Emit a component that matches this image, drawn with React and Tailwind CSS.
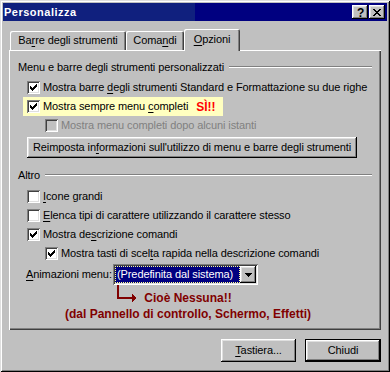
import React from "react";

const RAISED =
  "shadow-[inset_-1px_-1px_#000,inset_1px_1px_#fff,inset_-2px_-2px_#808080,inset_2px_2px_#dfdfdf]";
const SUNKEN =
  "shadow-[inset_1px_1px_#808080,inset_-1px_-1px_#fff,inset_2px_2px_#404040,inset_-2px_-2px_#dfdfdf]";

function Check({ checked, disabled }) {
  return (
    <div
      className={`relative w-[13px] h-[13px] shrink-0 ${disabled ? "bg-[#c0c0c0]" : "bg-white"} ${SUNKEN}`}
    >
      {checked && (
        <svg
          className="absolute left-[3px] top-[3px]"
          width="7"
          height="7"
          viewBox="0 0 7 7"
          shapeRendering="crispEdges"
        >
          <path
            d="M6 0h1v1h-1zM5 1h2v1h-2zM0 2h1v1h-1zM4 2h3v1h-3zM0 3h2v1h-2zM3 3h3v1h-3zM0 4h5v1h-5zM1 5h3v1h-3zM2 6h1v1h-1z"
            fill="#000"
          />
        </svg>
      )}
    </div>
  );
}

function Row({ checked, disabled, indent, children }) {
  return (
    <div
      className={`h-[19px] flex items-center gap-[3px] ${indent ? "pl-[36px]" : "pl-[18px]"} ${disabled ? "text-[#808080]" : ""}`}
    >
      <Check checked={checked} disabled={disabled} />
      <span className="whitespace-nowrap">{children}</span>
    </div>
  );
}

function Sep({ children }) {
  return (
    <div className="h-[14px] flex items-center pl-[9px] pr-[9px] gap-[5px]">
      <span className="whitespace-nowrap">{children}</span>
      <div className="flex-1 h-[2px] border-t border-t-[#808080] border-b border-b-white" />
    </div>
  );
}

const U = ({ children }) => <span className="underline underline-offset-[2px]">{children}</span>;

export default function App() {
  return (
    <div
      className={`w-[390px] h-[372px] bg-[#c0c0c0] p-[3px] flex flex-col text-[11px] leading-[13px] tracking-[-0.1px] text-black [font-family:'Liberation_Sans',Arial,sans-serif] shadow-[inset_1px_1px_#dfdfdf,inset_-1px_-1px_#000,inset_2px_2px_#fff,inset_-2px_-2px_#808080]`}
    >
      {/* Title bar */}
      <div className="h-[18px] shrink-0 flex items-center justify-between pl-[1px] pr-[2px] bg-[linear-gradient(to_right,#10207e_50%,#000080_50%)]">
        <span className="text-white font-bold text-[11px] tracking-[0.5px]">Personalizza</span>
        <div className="flex gap-[1px]">
          <div className={`w-[16px] h-[14px] bg-[#c0c0c0] ${RAISED} flex items-center justify-center`}>
            <span className="font-bold text-[12px] leading-[12px] pl-[1px] pt-[1px]">?</span>
          </div>
          <div className={`w-[16px] h-[14px] bg-[#c0c0c0] ${RAISED} flex items-center justify-center`}>
            <svg width="8" height="7" viewBox="0 0 8 7" shapeRendering="crispEdges">
              <path
                d="M0 0h2v1h-2zM6 0h2v1h-2zM1 1h2v1h-2zM5 1h2v1h-2zM2 2h4v1h-4zM3 3h2v1h-2zM2 4h4v1h-4zM1 5h2v1h-2zM5 5h2v1h-2zM0 6h2v1h-2zM6 6h2v1h-2z"
                fill="#000"
              />
            </svg>
          </div>
        </div>
      </div>

      {/* Tabs */}
      <div className="mt-[8px] ml-[7px] h-[21px] flex items-end">
        <div className="w-[116px] h-[19px] rounded-t-[2px] flex items-center justify-center shadow-[inset_1px_1px_#fff,inset_-1px_0_#404040,inset_-2px_0_#808080]">
          <span>
            Ba<U>r</U>re degli strumenti
          </span>
        </div>
        <div className="w-[58px] h-[19px] rounded-t-[2px] flex items-center justify-center shadow-[inset_1px_1px_#fff,inset_-1px_0_#404040,inset_-2px_0_#808080]">
          <span>
            Coma<U>n</U>di
          </span>
        </div>
        <div className="relative z-10 w-[56px] h-[22px] mb-[-1px] bg-[#c0c0c0] rounded-t-[2px] flex items-center justify-center pb-[1px] shadow-[inset_1px_1px_#fff,inset_-1px_0_#404040,inset_-2px_0_#808080]">
          <span>
            <U>O</U>pzioni
          </span>
        </div>
      </div>

      {/* Panel */}
      <div className="relative ml-[6px] mr-[6px] h-[280px] shrink-0 flex flex-col shadow-[inset_1px_1px_#fff,inset_-1px_-1px_#404040,inset_-2px_-2px_#808080]">
        <div className="mt-[10px]">
          <Sep>Menu e barre degli strumenti personalizzati</Sep>
        </div>
        <div className="mt-[4px]">
          <Row checked>
            Mostra barre <U>d</U>egli strumenti Standard e Formattazione su due righe
          </Row>
        </div>
        <div className="ml-[14px] w-[200px] h-[19px] bg-[#ffffc0] flex items-center gap-[3px] pl-[4px]">
          <Check checked />
          <span className="whitespace-nowrap">
            Mostra sempre menu <U>c</U>ompleti
          </span>
          <span className="ml-[5px] text-[#ff0000] font-bold text-[12px] leading-[14px] tracking-normal">SÌ!!</span>
        </div>
        <Row disabled indent>
          Mostra menu completi dopo alcuni istanti
        </Row>
        <div
          className={`mt-[2px] ml-[18px] w-[330px] h-[21px] ${RAISED} flex items-center justify-center whitespace-nowrap`}
        >
          <span>
            Reimposta in<U>f</U>ormazioni sull'utilizzo di menu e barre degli strumenti
          </span>
        </div>

        <div className="mt-[10px]">
          <Sep>Altro</Sep>
        </div>
        <div className="mt-[5px]">
          <Row>
            <U>I</U>cone grandi
          </Row>
          <Row>
            <U>E</U>lenca tipi di carattere utilizzando il carattere stesso
          </Row>
          <Row checked>
            Mostra de<U>s</U>crizione comandi
          </Row>
          <Row checked indent>
            Mostra tasti di scel<U>t</U>a rapida nella descrizione comandi
          </Row>
        </div>

        <div className="mt-[1px] pl-[17px] h-[21px] flex items-center">
          <span className="w-[87px] whitespace-nowrap">
            <U>A</U>nimazioni menu:
          </span>
          <div className={`w-[145px] h-[21px] bg-white p-[2px] flex ${SUNKEN}`}>
            <div className="flex-1 bg-[#000080] border border-dotted border-[#ffff90] text-white flex items-center pl-[1px] whitespace-nowrap overflow-hidden">
              (Predefinita dal sistema)
            </div>
            <div className={`w-[16px] h-full bg-[#c0c0c0] ${RAISED} flex items-center justify-center`}>
              <svg width="7" height="4" viewBox="0 0 7 4" shapeRendering="crispEdges">
                <path d="M0 0h7v1h-7zM1 1h5v1h-5zM2 2h3v1h-3zM3 3h1v1h-1z" fill="#000" />
              </svg>
            </div>
          </div>
        </div>

        {/* Annotation */}
        <div className="relative mt-[5px] pr-[14px] flex flex-col items-center text-[#800000] font-bold text-[12px] leading-[16px] tracking-normal whitespace-nowrap">
          <svg
            className="absolute left-[108px] top-[-5px]"
            width="22"
            height="20"
            viewBox="0 0 22 20"
            shapeRendering="crispEdges"
          >
            <path d="M0 0h2v14h-2zM0 12h16v2h-16z" fill="#800000" />
            <path d="M15 9L20 13L15 17Z" fill="#800000" />
          </svg>
          <span>Cioè Nessuna!!</span>
          <span>(dal Pannello di controllo, Schermo, Effetti)</span>
        </div>
      </div>

      {/* Bottom buttons */}
      <div className="mt-[9px] mr-[6px] flex justify-end gap-[9px]">
        <div className={`w-[75px] h-[23px] ${RAISED} flex items-center justify-center`}>
          <span>
            <U>T</U>astiera...
          </span>
        </div>
        <div className="w-[76px] h-[23px] border border-black">
          <div className={`w-full h-full ${RAISED} flex items-center justify-center`}>
            <span>Chiudi</span>
          </div>
        </div>
      </div>
    </div>
  );
}
